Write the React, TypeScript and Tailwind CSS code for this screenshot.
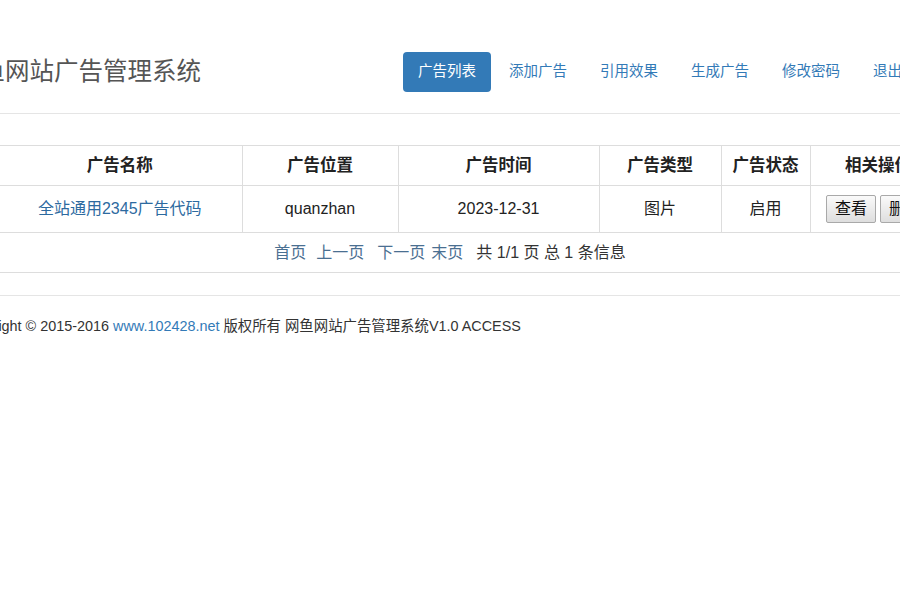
const font = { fontFamily: '"Liberation Sans", "Noto Sans CJK SC", sans-serif' };

const navItems = ['广告列表', '添加广告', '引用效果', '生成广告', '修改密码', '退出'];

const columns = [
  { label: '广告名称', w: 'w-[244px]' },
  { label: '广告位置', w: 'w-[156px]' },
  { label: '广告时间', w: 'w-[201px]' },
  { label: '广告类型', w: 'w-[122px]' },
  { label: '广告状态', w: 'w-[89px]' },
  { label: '相关操作', w: 'w-[136px]' },
];

const OpButton = ({ label }: { label: string }) => (
  <button
    type="button"
    className="h-[28px] w-[50px] rounded-[2px] border border-[#a9a9a9] bg-gradient-to-b from-[#fafafa] to-[#dedede] text-[16px] leading-none text-[#111]"
  >
    {label}
  </button>
);

export default function App() {
  return (
    <div className="h-[600px] w-full overflow-hidden bg-white" style={font}>
      <div className="-ml-[40px] w-[1040px]">
        {/* Header */}
        <div className="flex items-center border-b border-[#e5e5e5] pt-[52px] pb-[21px]">
          <h1 className="-ml-[4px] w-[447px] shrink-0 text-[24.5px] font-normal leading-none text-[#555]">网鱼网站广告管理系统</h1>
          <ul className="flex shrink-0 gap-[3px]">
            {navItems.map((item, i) => (
              <li key={item}>
                <a
                  className={
                    i === 0
                      ? 'flex h-[40px] w-[88px] items-center justify-center rounded-[4px] bg-[#337ab7] text-[14.5px] text-white'
                      : 'flex h-[40px] w-[88px] items-center pl-[15px] text-[14.5px] text-[#337ab7]'
                  }
                >
                  {item}
                </a>
              </li>
            ))}
          </ul>
        </div>

        {/* Table */}
        <table className="mt-[31px] ml-[38px] table-fixed border-collapse">
          <thead>
            <tr className="h-[40px] border-t border-b border-[#dddddd]">
              {columns.map((c) => (
                <th
                  key={c.label}
                  className={`${c.w} border-r border-[#dddddd] text-center text-[16.5px] font-bold text-[#222]`}
                >
                  {c.label}
                </th>
              ))}
            </tr>
          </thead>
          <tbody>
            <tr className="h-[47px] border-b border-[#dddddd] text-center text-[16px] text-[#222]">
              <td className="border-r border-[#dddddd]">
                <a className="text-[#2d6a9f]">全站通用2345广告代码</a>
              </td>
              <td className="border-r border-[#dddddd]">quanzhan</td>
              <td className="border-r border-[#dddddd]">2023-12-31</td>
              <td className="border-r border-[#dddddd]">图片</td>
              <td className="border-r border-[#dddddd]">启用</td>
              <td className="border-r border-[#dddddd]">
                <div className="flex justify-center gap-[4px]">
                  <OpButton label="查看" />
                  <OpButton label="删除" />
                </div>
              </td>
            </tr>
          </tbody>
        </table>

        {/* Pagination */}
        <div className="w-[980px]">
          <div className="flex h-[40px] items-center justify-center border-b border-[#dddddd] text-[16px] text-[#333]">
            <a className="text-[#4a6f91]">首页</a>
            <a className="ml-[10px] text-[#4a6f91]">上一页</a>
            <a className="ml-[13px] text-[#4a6f91]">下一页</a>
            <a className="ml-[6px] text-[#4a6f91]">末页</a>
            <span className="ml-[13px]">共 1/1 页 总 1 条信息</span>
          </div>
        </div>

        {/* Footer */}
        <div className="mt-[22px] border-t border-[#e5e5e5] pt-[20px] text-[14.4px] leading-[20px] text-[#333]">
          Copyright © 2015-2016 <a className="text-[#337ab7]">www.102428.net</a> 版权所有 网鱼网站广告管理系统V1.0 ACCESS
        </div>
      </div>
    </div>
  );
}
